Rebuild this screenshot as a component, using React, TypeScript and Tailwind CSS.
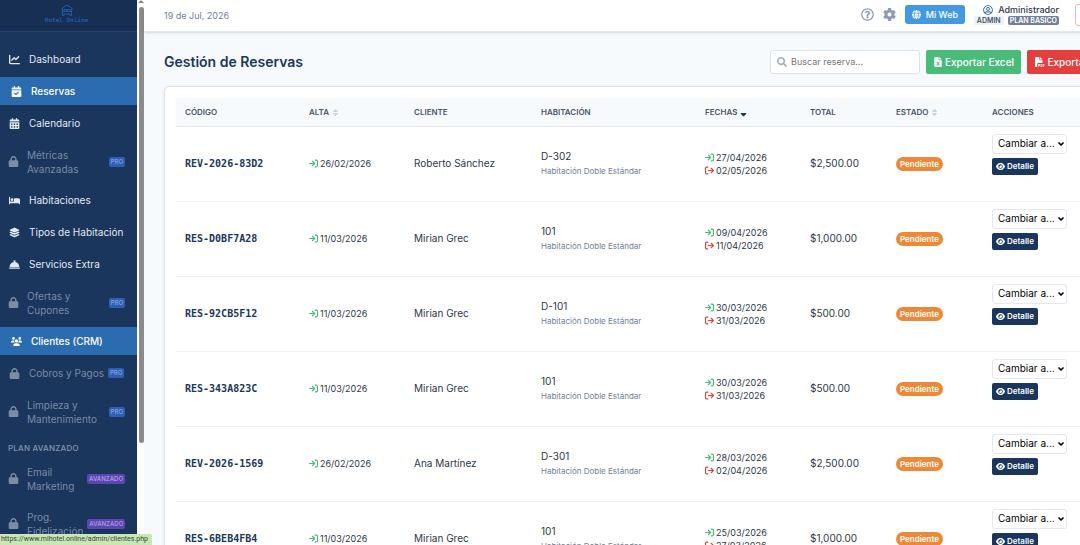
import type { ReactNode } from 'react'
import type { IconType } from 'react-icons'
import { ChevronDown } from 'lucide-react'
import {
  FaArrowRightFromBracket,
  FaArrowRightToBracket,
  FaBed,
  FaBellConcierge,
  FaCalendarCheck,
  FaCalendarDays,
  FaChartLine,
  FaEye,
  FaFileExcel,
  FaFilePdf,
  FaGear,
  FaGlobe,
  FaLayerGroup,
  FaLock,
  FaSortDown,
  FaUsers,
} from 'react-icons/fa6'
import { FaRegQuestionCircle, FaRegUserCircle, FaSearch, FaSort } from 'react-icons/fa'

type NavEntry = {
  label: string
  icon?: IconType
  active?: boolean
  badge?: 'PRO' | 'AVANZADO'
  lines?: [string, string]
}

const NAV: NavEntry[] = [
  { label: 'Dashboard', icon: FaChartLine },
  { label: 'Reservas', icon: FaCalendarCheck, active: true },
  { label: 'Calendario', icon: FaCalendarDays },
  { label: 'Métricas Avanzadas', lines: ['Métricas', 'Avanzadas'], badge: 'PRO' },
  { label: 'Habitaciones', icon: FaBed },
  { label: 'Tipos de Habitación', icon: FaLayerGroup },
  { label: 'Servicios Extra', icon: FaBellConcierge },
  { label: 'Ofertas y Cupones', lines: ['Ofertas y', 'Cupones'], badge: 'PRO' },
  { label: 'Clientes (CRM)', icon: FaUsers, active: true },
  { label: 'Cobros y Pagos', badge: 'PRO' },
  { label: 'Limpieza y Mantenimiento', lines: ['Limpieza y', 'Mantenimiento'], badge: 'PRO' },
]

const NAV_ADVANCED: NavEntry[] = [
  { label: 'Email Marketing', lines: ['Email', 'Marketing'], badge: 'AVANZADO' },
  { label: 'Prog. Fidelización', lines: ['Prog.', 'Fidelización'], badge: 'AVANZADO' },
]

const BOOKINGS = [
  { code: 'REV-2026-83D2', created: '26/02/2026', client: 'Roberto Sánchez', room: 'D-302', from: '27/04/2026', to: '02/05/2026', total: '$2,500.00' },
  { code: 'RES-D0BF7A28', created: '11/03/2026', client: 'Mirian Grec', room: '101', from: '09/04/2026', to: '11/04/2026', total: '$1,000.00' },
  { code: 'RES-92CB5F12', created: '11/03/2026', client: 'Mirian Grec', room: 'D-101', from: '30/03/2026', to: '31/03/2026', total: '$500.00' },
  { code: 'RES-343A823C', created: '11/03/2026', client: 'Mirian Grec', room: '101', from: '30/03/2026', to: '31/03/2026', total: '$500.00' },
  { code: 'REV-2026-1569', created: '26/02/2026', client: 'Ana Martínez', room: 'D-301', from: '28/03/2026', to: '02/04/2026', total: '$2,500.00' },
  { code: 'RES-6BEB4FB4', created: '11/03/2026', client: 'Mirian Grec', room: '101', from: '25/03/2026', to: '27/03/2026', total: '$1,000.00' },
]

function Logo() {
  return (
    <svg viewBox="0 0 24 24" className="size-3" fill="none" stroke="currentColor" strokeWidth="2" strokeLinejoin="round" aria-hidden="true">
      <path d="M1 11v-1l7-6c3-2 5-2 8 0l7 6v1" />
      <path d="M3 10v13h3v-3h12v3h3V10" />
      <path d="M6 15v-4h5v4M13 15v-4h5v4M3 15h18" />
    </svg>
  )
}

function NavItem({ item }: { item: NavEntry }) {
  const locked = Boolean(item.badge)
  const Icon = item.icon ?? FaLock
  const tone = item.active
    ? 'bg-[#2b6cb0] pl-[9px] font-medium text-white'
    : locked
      ? 'pl-[7px] text-[#cbd5e0]/55'
      : 'pl-[7px] text-[#e2e8f0]'

  return (
    <li>
      <a
        href="#"
        className={`flex items-center pr-3 ${item.lines ? 'min-h-[41px]' : 'min-h-7'} ${tone}`}
      >
        <span className={`mr-2 flex shrink-0 justify-center ${item.lines ? 'w-3' : 'w-[14px]'}`}>
          <Icon className="size-[11px]" />
        </span>
        <span className={item.lines ? 'flex-1' : 'whitespace-nowrap'}>
          {item.lines ? item.lines.map((line) => <span key={line} className="block">{line}</span>) : item.label}
        </span>
        {item.badge && (
          <span
            className={`ml-1 rounded-xs px-[2px] text-[6px] leading-[10px] font-semibold ${
              item.badge === 'PRO' ? 'bg-[#2f5fb5] text-[#7b9bd6]' : 'bg-[#5b45b0] text-[#a699dc]'
            }`}
          >
            {item.badge}
          </span>
        )}
      </a>
    </li>
  )
}

function Sidebar() {
  return (
    <aside className="flex w-36 shrink-0 overflow-hidden">
      <div className="w-[137px] shrink-0 bg-[#1a365d] text-[10px] leading-[14px]">
        <div className="flex h-8 flex-col items-center border-b border-[#24426b] bg-[#172f53] pt-1 pr-1 text-[#2459a8]">
          <Logo />
          <span className="font-['DejaVu_Sans_Mono',monospace] text-[6px] leading-[7px] font-bold">Hotel Online</span>
        </div>
        <nav className="pt-[13px]">
          <ul className="flex flex-col gap-1">
            {NAV.map((item) => <NavItem key={item.label} item={item} />)}
          </ul>
          <h2 className="mt-2 mb-[2px] pl-2 text-[8px] leading-4 font-medium tracking-wide text-[#8495ad]">
            PLAN AVANZADO
          </h2>
          <ul className="flex flex-col gap-1">
            {NAV_ADVANCED.map((item) => <NavItem key={item.label} item={item} />)}
          </ul>
        </nav>
      </div>
      <div className="flex flex-1 flex-col items-end bg-white" aria-hidden="true">
        <svg viewBox="0 0 6 3" className="mb-1 h-[3px] w-[6px] shrink-0 fill-[#8b8b8b]">
          <path d="M3 0l3 3H0z" />
        </svg>
        <div className="h-4/5 w-[5px] rounded-full bg-[#8b8b8b]" />
      </div>
    </aside>
  )
}

function TopBar() {
  return (
    <header className="flex h-8 shrink-0 items-center justify-between border-b border-[#e2e8f0] bg-white pl-5 shadow-sm">
      <span className="text-[9px] text-[#718096]">19 de Jul, 2026</span>
      <div className="flex items-center pb-[2px]">
        <button type="button" aria-label="Ayuda" className="mr-[9px] text-[#8f9bb0]">
          <FaRegQuestionCircle className="size-[13px]" />
        </button>
        <button type="button" aria-label="Configuración" className="mr-[9px] text-[#8f9bb0]">
          <FaGear className="size-[13px]" />
        </button>
        <a href="#" className="mr-[9px] flex h-[19px] w-[60px] items-center justify-center gap-[5px] rounded-[3px] bg-[#4299e1] text-[9px] font-medium text-white">
          <FaGlobe className="size-[9px]" />
          Mi Web
        </a>
        <div className="mr-4 flex flex-col items-end">
          <span className="flex items-center gap-[5px] text-[9px] leading-3 font-medium text-[#2d3748]">
            <FaRegUserCircle className="size-[10px] text-[#2b6cb0]" />
            Administrador
          </span>
          <span className="flex gap-1 text-[7px] leading-[9px] font-semibold">
            <span className="rounded-xs bg-[#edf2f7] px-[3px] text-[#4a5568]">ADMIN</span>
            <span className="rounded-xs bg-[#718096] px-[2px] text-white">PLAN BASICO</span>
          </span>
        </div>
        <button type="button" className="h-[22px] w-16 rounded-[3px] border border-[#feb2b2] pl-2 text-[9px] text-[#e53e3e]">
          Salir
        </button>
      </div>
    </header>
  )
}

function Th({ className = '', children }: { className?: string; children: ReactNode }) {
  return <th scope="col" className={`h-7 px-[9px] text-left font-semibold ${className}`}>{children}</th>
}

function BookingTable() {
  return (
    <table className="w-full table-fixed text-[10px] text-[#2d3748]">
      <thead className="border-b border-[#e2e8f0] bg-[#f7fafc] text-[8px] text-[#4a5568]">
        <tr>
          <Th className="w-[124px]">CÓDIGO</Th>
          <Th className="w-[105px]">
            ALTA <FaSort className="inline size-[9px] text-[#cbd5e0]" />
          </Th>
          <Th className="w-[127px]">CLIENTE</Th>
          <Th className="w-[164px]">HABITACIÓN</Th>
          <Th className="w-[105px]">
            FECHAS <FaSortDown className="inline size-[9px] text-[#2d3748]" />
          </Th>
          <Th className="w-[86px]">TOTAL</Th>
          <Th className="w-[96px]">
            ESTADO <FaSort className="inline size-[9px] text-[#cbd5e0]" />
          </Th>
          <Th>ACCIONES</Th>
        </tr>
      </thead>
      <tbody>
        {BOOKINGS.map((b) => (
          <tr key={b.code} className="h-[75px] border-b border-[#edf2f7]">
            <td className="px-[9px] font-['DejaVu_Sans_Mono',monospace] font-bold text-[#1a365d]">{b.code}</td>
            <td className="px-[9px] text-[9px]">
              <span className="flex items-center gap-[2px]">
                <FaArrowRightToBracket className="size-[9px] text-[#48bb78]" />
                {b.created}
              </span>
            </td>
            <td className="px-[9px]">{b.client}</td>
            <td className="px-[9px] leading-[15px]">
              {b.room}
              <span className="block text-[8px] text-[#718096]">Habitación Doble Estándar</span>
            </td>
            <td className="px-[9px] text-[9px] leading-[13px]">
              <span className="flex items-center gap-[2px]">
                <FaArrowRightToBracket className="size-[9px] text-[#48bb78]" />
                {b.from}
              </span>
              <span className="flex items-center gap-[2px]">
                <FaArrowRightFromBracket className="size-[9px] text-[#e53e3e]" />
                {b.to}
              </span>
            </td>
            <td className="px-[9px]">{b.total}</td>
            <td className="px-[9px]">
              <span className="inline-block rounded-full bg-[#ed8936] px-1 text-[8px] leading-[14px] font-semibold text-white">
                Pendiente
              </span>
            </td>
            <td className="px-[9px] pt-[7px] align-top">
              <div className="mb-1 grid w-[75px] items-center">
                <select
                  aria-label={`Estado de ${b.code}`}
                  className="col-start-1 row-start-1 h-5 appearance-none rounded-[3px] border border-[#e2e8f0] bg-white pl-[5px] text-[10px] text-black"
                >
                  <option>Cambiar a...</option>
                  <option>Confirmada</option>
                  <option>Cancelada</option>
                </select>
                <ChevronDown
                  strokeWidth={5}
                  className="pointer-events-none col-start-1 row-start-1 mr-[2px] size-2 justify-self-end text-black"
                />
              </div>
              <button type="button" className="flex h-[17px] items-center gap-[2px] rounded-xs bg-[#1a365d] px-1 text-[8px] font-semibold text-white">
                <FaEye className="size-[9px]" />
                Detalle
              </button>
            </td>
          </tr>
        ))}
      </tbody>
    </table>
  )
}

export default function App() {
  return (
    <div className="relative flex h-screen overflow-hidden bg-[#f7fafc] font-['Inter',sans-serif]">
      <Sidebar />
      <div className="flex min-w-[995px] flex-1 flex-col">
        <TopBar />
        <main className="px-5 pt-[18px]">
          <div className="flex items-center justify-between">
            <h1 className="text-[14px] leading-6 font-semibold text-[#1a365d]">Gestión de Reservas</h1>
            <div className="flex gap-[6px] text-[10px] font-medium">
              <label className="flex h-6 w-[150px] items-center gap-1 rounded-[3px] border border-[#dbe3ec] bg-white px-[6px]">
                <FaSearch className="size-[10px] shrink-0 text-[#a0aec0]" />
                <span className="sr-only">Buscar reserva</span>
                <input type="search" placeholder="Buscar reserva..." className="w-full min-w-0 text-[9px] font-normal outline-none placeholder:text-[#757575]" />
              </label>
              <button type="button" className="flex h-6 w-[95px] items-center justify-center gap-[2px] rounded-xs bg-[#48bb78] text-white">
                <FaFileExcel className="size-[10px]" />
                Exportar Excel
              </button>
              <button type="button" className="flex h-6 w-[92px] items-center justify-center gap-[2px] rounded-xs bg-[#e53e3e] text-white">
                <FaFilePdf className="size-[10px]" />
                Exportar PDF
              </button>
            </div>
          </div>
          <section className="mt-3 rounded-[5px] border border-[#dbe3ec] bg-white p-[11px] shadow-sm">
            <BookingTable />
          </section>
        </main>
      </div>
      <div className="absolute bottom-0 left-0 flex h-[11px] w-[152px] items-center justify-end overflow-hidden rounded-tr-xs bg-[#c8e6b6] pr-1 font-['Roboto',sans-serif] text-[7px] leading-[11px] whitespace-nowrap text-[#33472b]">
        https://www.mihotel.online/admin/clientes.php
      </div>
    </div>
  )
}
